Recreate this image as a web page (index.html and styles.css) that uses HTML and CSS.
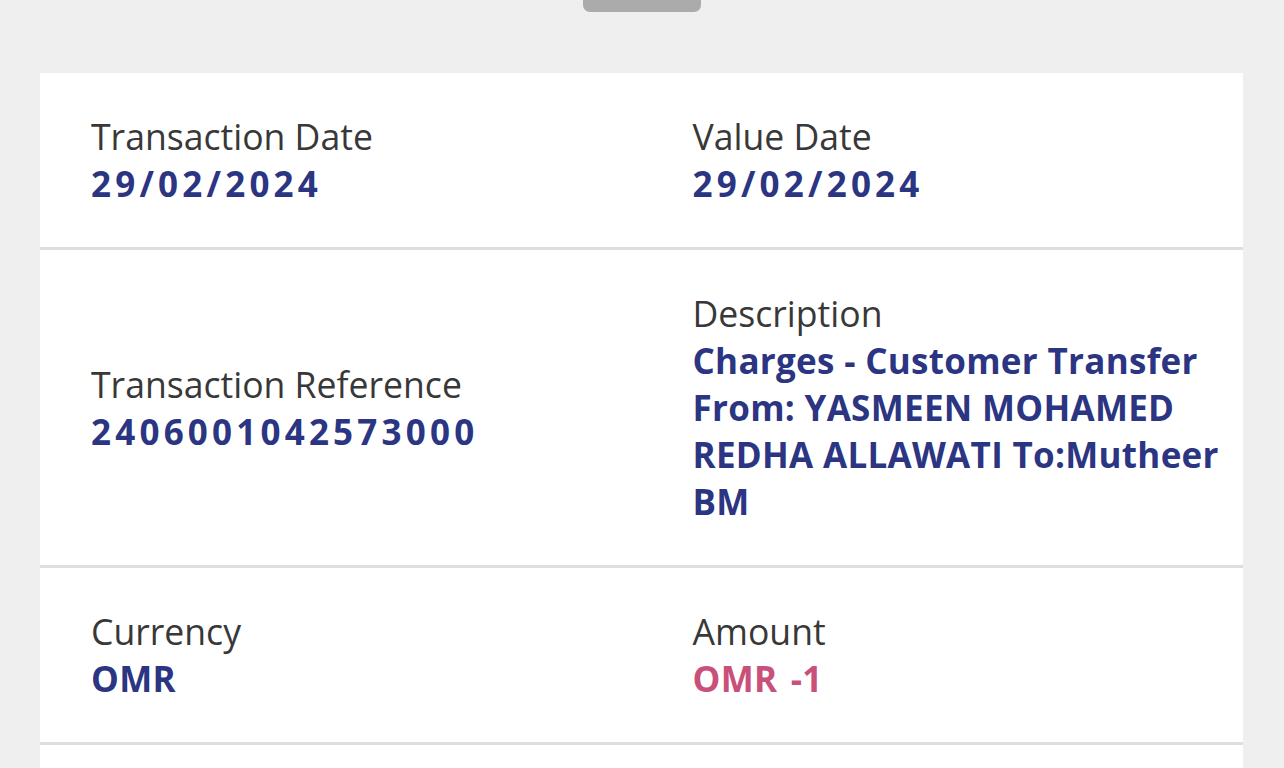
FILE: index.html
```html
<!DOCTYPE html>
<html lang="en">
<head>
<meta charset="utf-8">
<title>Transaction Details</title>
<link rel="stylesheet" href="styles.css">
</head>
<body>
<div class="sheet">
  <div class="handle"></div>
  <div class="card">
    <div class="row">
      <div class="cell">
        <div class="label">Transaction Date</div>
        <div class="value num">29/02/2024</div>
      </div>
      <div class="cell">
        <div class="label">Value Date</div>
        <div class="value num">29/02/2024</div>
      </div>
    </div>
    <div class="row">
      <div class="cell">
        <div class="label">Transaction Reference</div>
        <div class="value num">2406001042573000</div>
      </div>
      <div class="cell">
        <div class="label">Description</div>
        <div class="value">Charges - Customer Transfer From: YASMEEN MOHAMED REDHA ALLAWATI To:Mutheer BM</div>
      </div>
    </div>
    <div class="row">
      <div class="cell">
        <div class="label">Currency</div>
        <div class="value">OMR</div>
      </div>
      <div class="cell">
        <div class="label">Amount</div>
        <div class="value debit">OMR -1</div>
      </div>
    </div>
    <div class="row row-empty"></div>
  </div>
</div>
</body>
</html>
```

FILE: styles.css
```css
* { box-sizing: border-box; }
html, body {
  margin: 0;
  padding: 0;
  background: #efefef;
}
body {
  font-family: "Open Sans", "Noto Sans", sans-serif;
  -webkit-font-smoothing: antialiased;
}
.sheet {
  display: flex;
  flex-direction: column;
  align-items: center;
  padding: 0 41px 0 40px;
}
.handle {
  width: 118px;
  height: 12px;
  background: #ababab;
  border-radius: 0 0 7px 7px;
  margin-bottom: 61px;
}
.card {
  align-self: stretch;
  background: #ffffff;
  display: flex;
  flex-direction: column;
}
.row {
  display: grid;
  grid-template-columns: 1fr 1fr;
  align-items: center;
  padding: 40px 0;
  border-bottom: 3px solid #dedede;
}
.row-empty {
  min-height: 120px;
  border-bottom: none;
}
.cell {
  padding: 0 12px 0 51px;
}
.label {
  font-size: 35.6px;
  line-height: 47px;
  font-weight: 400;
  color: #383838;
}
.value {
  font-size: 35px;
  line-height: 47px;
  font-weight: 700;
  color: #2b3582;
  letter-spacing: 0.3px;
}
.num {
  letter-spacing: 4.2px;
}
.debit {
  color: #c8507a;
  word-spacing: 4px;
}
```
